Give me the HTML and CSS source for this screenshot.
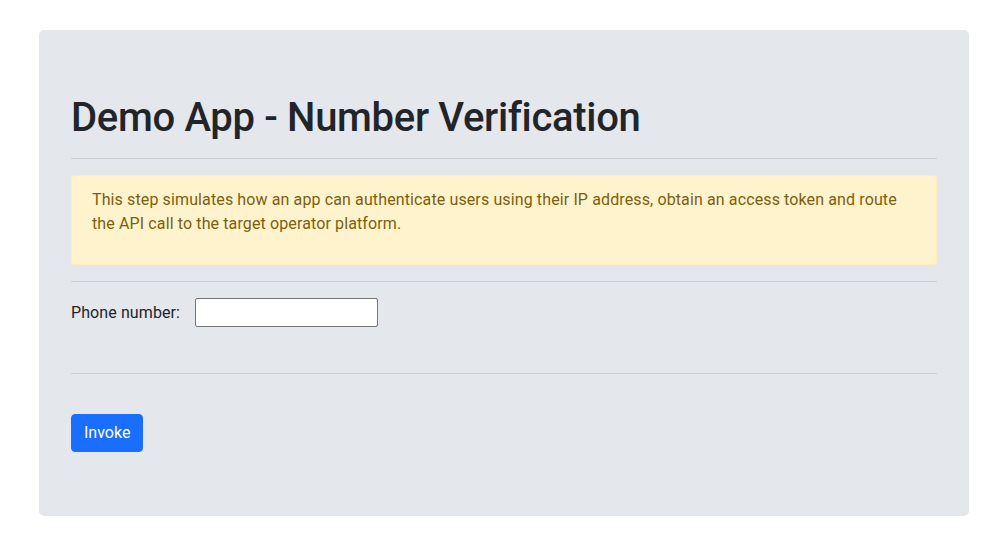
FILE: index.html
```html
<!DOCTYPE html>
<html lang="en">
<head>
<meta charset="utf-8">
<title>Demo App - Number Verification</title>
<link rel="stylesheet" href="styles.css">
</head>
<body>
<div class="page">
  <div class="jumbotron">
    <h1 class="title">Demo App - Number Verification</h1>
    <hr class="rule">
    <div class="alert">
      <p class="alert-text">This step simulates how an app can authenticate users using their IP address, obtain an access token and route the API call to the target operator platform.</p>
    </div>
    <hr class="rule">
    <div class="field">
      <label class="field-label" for="phone">Phone number:</label>
      <input class="field-input" id="phone" type="text">
    </div>
    <hr class="rule">
    <div class="actions">
      <button class="btn" type="button">Invoke</button>
    </div>
  </div>
</div>
</body>
</html>
```
FILE: styles.css
```css
html, body {
  margin: 0;
  padding: 0;
  background: #fff;
}
body {
  font-family: Roboto, "Liberation Sans", sans-serif;
  font-size: 16px;
  line-height: 24px;
  color: #212529;
}
.page {
  padding-top: 30px;
  padding-left: 39px;
}
.jumbotron {
  width: 930px;
  box-sizing: border-box;
  padding: 64px 32px;
  background: #e4e7eb;
  border-radius: 5px;
}
.title {
  margin: 0 0 8px;
  height: 48px;
  font-size: 40px;
  font-weight: 500;
  line-height: 48px;
  letter-spacing: -0.32px;
}
.rule {
  margin: 16px 0;
  border: 0;
  border-top: 1px solid rgba(0, 0, 0, 0.1);
  height: 0;
}
.alert {
  padding: 12px 20px;
  background: #fff3cd;
  border: 1px solid #ffeeba;
  border-radius: 4px;
  color: #7d5e0c;
  margin-bottom: 16px;
}
.alert-text {
  margin: 0 0 16px;
  font-size: 16px;
  line-height: 24px;
  letter-spacing: 0.12px;
}
.field {
  display: flex;
  align-items: center;
  gap: 15px;
  padding-bottom: 30px;
}
.field-label {
  font-size: 16px;
  letter-spacing: 0.1px;
}
.field-input {
  width: 183px;
  height: 29px;
  box-sizing: border-box;
  border: 1px solid #767676;
  border-radius: 2px;
  background: #fff;
  padding: 1px 2px;
  font-size: 13px;
}
.actions {
  padding-top: 24px;
}
.btn {
  display: inline-block;
  font-family: inherit;
  font-size: 16px;
  line-height: 24px;
  padding: 6px 12px;
  color: #fff;
  background: #1a6efd;
  border: 1px solid #1a6efd;
  border-radius: 4px;
  cursor: pointer;
}
```
